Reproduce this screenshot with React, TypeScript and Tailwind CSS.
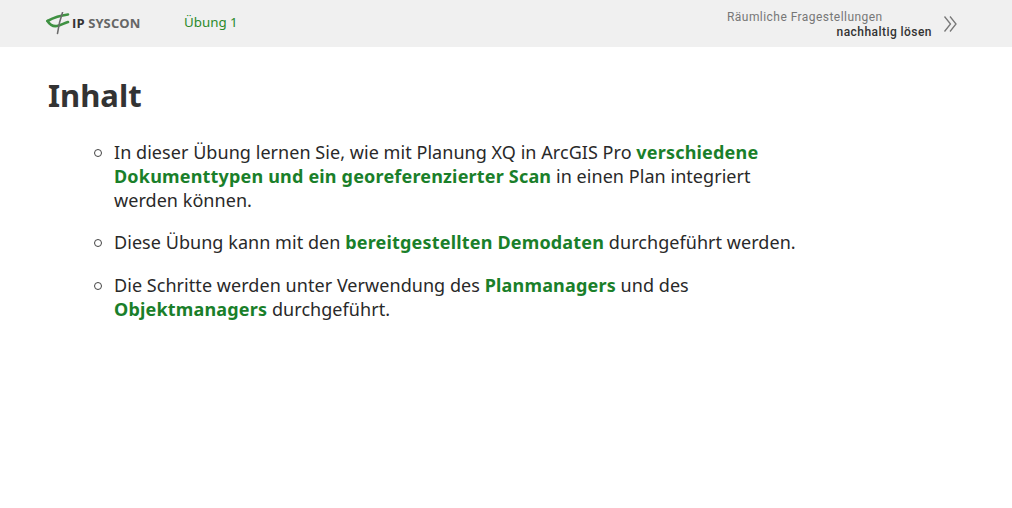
function Logo() {
  return (
    <svg width="26" height="24" viewBox="0 0 26 24" fill="none">
      <path d="M1.5 9 C7 6 14 3.5 22 2.5" stroke="#3f9142" strokeWidth="2.6" strokeLinecap="round" />
      <path d="M1.5 9 C4 13 8 14.5 11 14 C15 13.5 18 11 22 10" stroke="#3f9142" strokeWidth="2.6" strokeLinecap="round" />
      <path d="M16.5 0.5 C14.5 6 12.5 14 11.5 21.5" stroke="#6b6b6b" strokeWidth="1.6" strokeLinecap="round" />
    </svg>
  );
}

function Bullet() {
  return <span className="mr-[12px] mt-[9px] h-[8px] w-[8px] shrink-0 rounded-full border border-[#444444]" />;
}

function Strong({ children }: { children: string }) {
  return <strong className="tracking-[0.18px] text-[#1a7f2a]">{children}</strong>;
}

export default function App() {
  return (
    <div className="min-h-[508px] bg-white font-['Noto_Sans',sans-serif] text-[#292929]">
      <header className="flex h-[47px] items-center justify-between bg-[#f0f0f0] pl-[46px] pr-[54px]">
        <div className="flex items-center">
          <Logo />
          <span className="w-[69px] whitespace-nowrap font-['Open_Sans',sans-serif] text-[13px] font-bold leading-none tracking-[0.1px] text-[#666666]">
            <span className="text-[#333333]">IP</span> SYSCON
          </span>
          <span className="mb-[2px] ml-[43px] text-[13.33px] text-[#2a8a2a]">Übung 1</span>
        </div>
        <div className="flex items-center gap-[11px]">
          <div className="mt-[2px] flex w-[205px] flex-col font-['Roboto',sans-serif] text-xs leading-[15px] tracking-[0.45px]">
            <span className="text-[#777777]">Räumliche Fragestellungen</span>
            <span className="self-end font-medium text-[#333333]">nachhaltig lösen</span>
          </div>
          <svg width="15" height="18" viewBox="0 0 15 18" fill="none" stroke="#777777" strokeWidth="1.3">
            <path d="M1.5 1.5 L7.5 9 L1.5 16.5" />
            <path d="M7 1.5 L13 9 L7 16.5" />
          </svg>
        </div>
      </header>
      <main className="pl-[48px] pt-[26px]">
        <h1 className="text-[31px] font-bold leading-[44px] text-[#333333]">Inhalt</h1>
        <ul className="mt-[23px] flex w-[750px] flex-col gap-[18px] pl-[46px] text-lg leading-6 tracking-[0.05px]">
          <li className="flex">
            <Bullet />
            <p>
              In dieser Übung lernen Sie, wie mit Planung XQ in ArcGIS Pro{" "}
              <Strong>verschiedene Dokumenttypen und ein georeferenzierter Scan</Strong> in einen Plan integriert werden können.
            </p>
          </li>
          <li className="mb-px flex">
            <Bullet />
            <p>
              Diese Übung kann mit den <Strong>bereitgestellten Demodaten</Strong> durchgeführt werden.
            </p>
          </li>
          <li className="flex">
            <Bullet />
            <p>
              Die Schritte werden unter Verwendung des <Strong>Planmanagers</Strong> und des{" "}
              <Strong>Objektmanagers</Strong> durchgeführt.
            </p>
          </li>
        </ul>
      </main>
    </div>
  );
}
